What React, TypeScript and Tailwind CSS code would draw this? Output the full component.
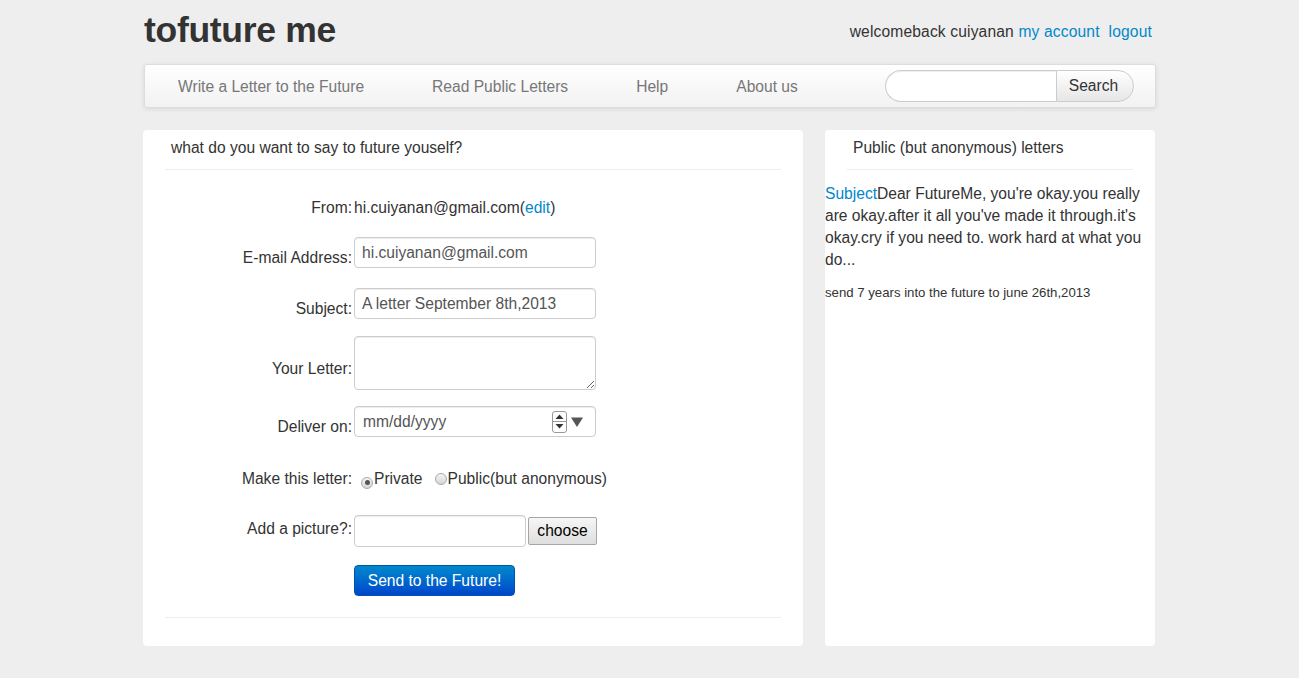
import React from 'react';

const navItems = ['Write a Letter to the Future', 'Read Public Letters', 'Help', 'About us'];

const inputCls =
  'h-[31px] w-[242px] rounded-[4px] border border-[#cccccc] bg-white px-[7px] text-[15.6px] text-[#555555] shadow-[inset_0_1px_1px_rgba(0,0,0,0.075)] outline-none';

const Label: React.FC<{ children: React.ReactNode; className?: string }> = ({ children, className = '' }) => (
  <div className={`w-[187px] shrink-0 text-right leading-[20px] ${className}`}>{children}</div>
);

const Radio: React.FC<{ checked?: boolean }> = ({ checked }) => (
  <span className="inline-flex h-[12px] w-[12px] items-center justify-center rounded-full border border-[#a9a9a9] bg-gradient-to-b from-[#f4f4f4] to-[#d6d6d6]">
    {checked && <span className="h-[5px] w-[5px] rounded-full bg-[#555555]" />}
  </span>
);

export default function App() {
  return (
    <div className="min-h-[678px] w-full bg-[#eeeeee] text-[15.6px] text-[#333333]" style={{ fontFamily: '"Liberation Sans", Arial, sans-serif' }}>
      <div className="mx-auto w-[1013px]">
        {/* Header */}
        <header className="flex items-center justify-between pt-[10px] pb-[14px] pl-[1px]">
          <h1 className="text-[35.5px] font-bold leading-[40px] tracking-[-0.3px] text-[#333333]">tofuture me</h1>
          <div className="mr-[4px] pt-[3px] leading-[20px] tracking-[0.15px]">
            welcomeback cuiyanan <a className="text-[#0088cc]">my account</a>&nbsp; <a className="text-[#0088cc]">logout</a>
          </div>
        </header>

        {/* Navbar */}
        <nav className="ml-[1px] flex h-[44px] items-center rounded-[3px] border border-[#dddddd] bg-gradient-to-b from-white to-[#f2f2f2] shadow-[0_1px_4px_rgba(0,0,0,0.1)]">
          <ul className="flex pt-[1px]">
            {navItems.map(item => (
              <li key={item} className="px-[34px] leading-[20px] text-[#777777] first:pl-[33px]">
                {item}
              </li>
            ))}
          </ul>
          <div className="ml-auto mr-[21px] flex h-[32px]">
            <input className="h-[32px] w-[171px] rounded-l-[16px] border border-r-0 border-[#cccccc] bg-white px-3 shadow-[inset_0_1px_1px_rgba(0,0,0,0.075)] outline-none" />
            <button className="h-[32px] w-[78px] rounded-r-[16px] border border-[#cccccc] bg-gradient-to-b from-white to-[#e6e6e6] pr-[3px] text-[15.6px] text-[#333333]">
              Search
            </button>
          </div>
        </nav>

        <div className="mt-[22px] flex gap-[22px]">
          {/* Main form card */}
          <section className="w-[660px] rounded-[4px] bg-white px-[22px]">
            <div className="border-b border-[#eeeeee] pt-[8px] pb-[11px] pl-[6px] leading-[20px]">
              what do you want to say to future youself?
            </div>

            <div className="flex items-center pt-[28px]">
              <Label>From:</Label>
              <div className="ml-[2px] leading-[20px]">
                hi.cuiyanan@gmail.com(<a className="text-[#0088cc]">edit</a>)
              </div>
            </div>

            <div className="mt-[19px] flex items-center">
              <Label className="pt-[11px]">E-mail Address:</Label>
              <input className={`ml-[2px] ${inputCls}`} defaultValue="hi.cuiyanan@gmail.com" />
            </div>

            <div className="mt-[20px] flex items-center">
              <Label className="pt-[11px]">Subject:</Label>
              <input className={`ml-[2px] ${inputCls}`} defaultValue="A letter September 8th,2013" />
            </div>

            <div className="mt-[17px] flex items-center">
              <Label className="pt-[11px]">Your Letter:</Label>
              <textarea className="ml-[2px] h-[54px] w-[242px] rounded-[4px] border border-[#cccccc] bg-white shadow-[inset_0_1px_1px_rgba(0,0,0,0.075)] outline-none" />
            </div>

            <div className="mt-[16px] flex items-center">
              <Label className="pt-[11px]">Deliver on:</Label>
              <div className={`ml-[2px] flex items-center ${inputCls}`}>
                <span className="flex-1 pl-[1px] pt-[1px]">mm/dd/yyyy</span>
                <span className="flex h-[22px] w-[15px] flex-col items-center justify-center rounded-[3px] border border-[#999999] bg-white">
                  <svg width="9" height="6" viewBox="0 0 9 6"><path d="M4.5 0.5 L8.5 5 L0.5 5 Z" fill="#333" /></svg>
                  <span className="my-[1px] h-[1px] w-[13px] bg-[#999999]" />
                  <svg width="9" height="6" viewBox="0 0 9 6"><path d="M0.5 1 L8.5 1 L4.5 5.5 Z" fill="#333" /></svg>
                </span>
                <svg className="ml-[4px] mr-[5px]" width="12" height="10" viewBox="0 0 12 10"><path d="M0 0.5 L12 0.5 L6 10 Z" fill="#555" /></svg>
              </div>
            </div>

            <div className="mt-[30px] flex items-center">
              <Label>Make this letter:</Label>
              <div className="ml-[2px] flex items-center leading-[20px]">
                <span className="ml-[7px] mr-[1px] mt-[3px]"><Radio checked /></span>Private
                <span className="ml-[12px] mr-[1px] mt-[3px]"><Radio /></span>Public(but anonymous)
              </div>
            </div>

            <div className="mt-[25px] flex items-center">
              <Label className="mb-[4px]">Add a picture?:</Label>
              <input className="ml-[2px] h-[32px] w-[172px] rounded-[4px] border border-[#cccccc] bg-white shadow-[inset_0_1px_1px_rgba(0,0,0,0.075)] outline-none" />
              <button className="ml-[2px] h-[28px] w-[69px] rounded-[2px] border border-[#a6a6a6] bg-gradient-to-b from-[#f6f6f6] to-[#dedede] text-[15.6px] text-black">
                choose
              </button>
            </div>

            <div className="mt-[18px] flex">
              <div className="w-[189px] shrink-0" />
              <button className="h-[31px] w-[161px] rounded-[4px] border border-[#0055aa] bg-gradient-to-b from-[#0088cc] to-[#0044cc] text-[15.6px] text-white">
                Send to the Future!
              </button>
            </div>

            <div className="mt-[21px] h-[29px] border-t border-[#eeeeee]" />
          </section>

          {/* Sidebar */}
          <aside className="w-[330px] rounded-[4px] bg-white">
            <div className="mx-[22px] border-b border-[#eeeeee] pt-[8px] pb-[11px] pl-[6px] leading-[20px]">
              Public (but anonymous) letters
            </div>
            <p className="mt-[13px] pr-[8px] leading-[22px]">
              <a className="text-[#0088cc]">Subject</a>Dear FutureMe, you're okay.you really are okay.after it all you've made it through.it's okay.cry if you need to. work hard at what you do...
            </p>
            <p className="mt-[13px] text-[13.2px] leading-[18px]">send 7 years into the future to june 26th,2013</p>
          </aside>
        </div>
      </div>
    </div>
  );
}
